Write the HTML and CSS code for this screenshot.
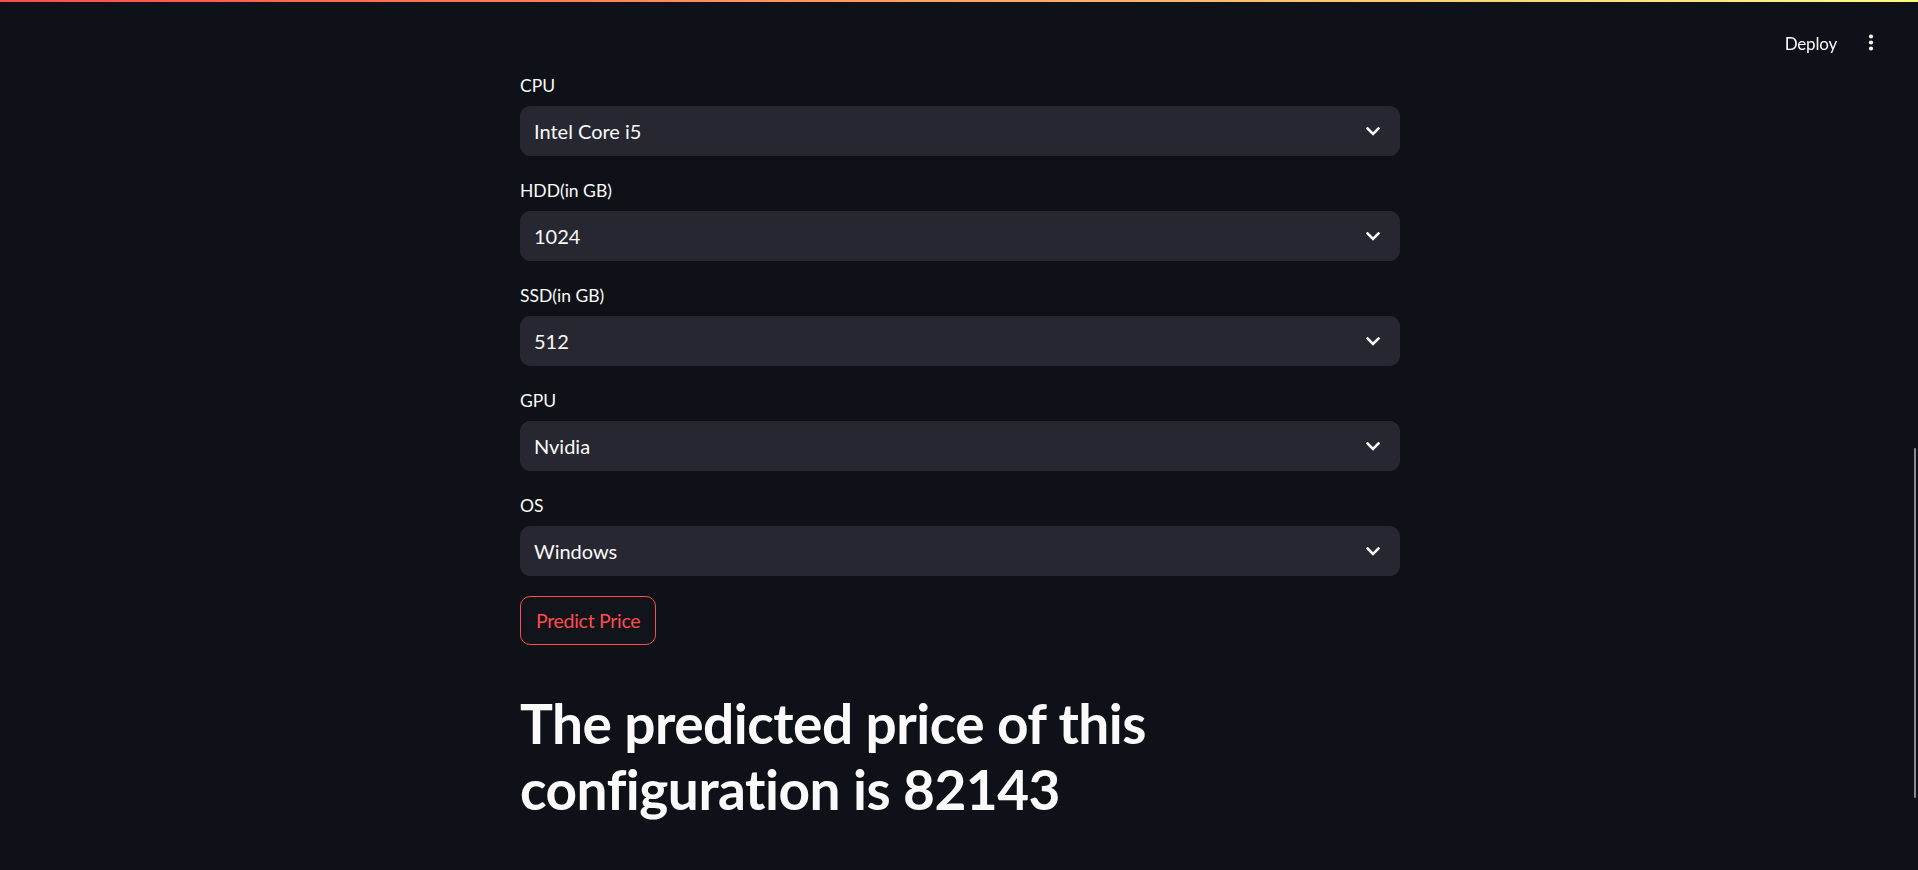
FILE: index.html
```html
<!DOCTYPE html>
<html lang="en">
<head>
<meta charset="utf-8">
<title>Laptop Price Predictor</title>
<link rel="stylesheet" href="styles.css">
</head>
<body>
<div class="decoration"></div>
<header class="toolbar">
  <span class="deploy">Deploy</span>
  <span class="kebab" aria-label="Main menu">
    <svg width="6" height="18" viewBox="0 0 6 18"><circle cx="3" cy="2.5" r="2.1" fill="#fafafa"/><circle cx="3" cy="8.5" r="2.1" fill="#fafafa"/><circle cx="3" cy="14.5" r="2.1" fill="#fafafa"/></svg>
  </span>
</header>
<div class="app">
  <main class="block">
    <div class="widget">
      <label class="label">CPU</label>
      <div class="select"><span class="value">Intel Core i5</span><svg class="chev" width="14" height="9" viewBox="0 0 14 9"><path d="M1.5 1.5 L7 7 L12.5 1.5" fill="none" stroke="#fafafa" stroke-width="2.6" stroke-linecap="square"/></svg></div>
    </div>
    <div class="widget">
      <label class="label">HDD(in GB)</label>
      <div class="select"><span class="value">1024</span><svg class="chev" width="14" height="9" viewBox="0 0 14 9"><path d="M1.5 1.5 L7 7 L12.5 1.5" fill="none" stroke="#fafafa" stroke-width="2.6" stroke-linecap="square"/></svg></div>
    </div>
    <div class="widget">
      <label class="label">SSD(in GB)</label>
      <div class="select"><span class="value">512</span><svg class="chev" width="14" height="9" viewBox="0 0 14 9"><path d="M1.5 1.5 L7 7 L12.5 1.5" fill="none" stroke="#fafafa" stroke-width="2.6" stroke-linecap="square"/></svg></div>
    </div>
    <div class="widget">
      <label class="label">GPU</label>
      <div class="select"><span class="value">Nvidia</span><svg class="chev" width="14" height="9" viewBox="0 0 14 9"><path d="M1.5 1.5 L7 7 L12.5 1.5" fill="none" stroke="#fafafa" stroke-width="2.6" stroke-linecap="square"/></svg></div>
    </div>
    <div class="widget">
      <label class="label">OS</label>
      <div class="select"><span class="value">Windows</span><svg class="chev" width="14" height="9" viewBox="0 0 14 9"><path d="M1.5 1.5 L7 7 L12.5 1.5" fill="none" stroke="#fafafa" stroke-width="2.6" stroke-linecap="square"/></svg></div>
    </div>
    <div class="widget">
      <button class="btn">Predict Price</button>
    </div>
    <h1 class="result">The predicted price of this configuration is 82143</h1>
  </main>
</div>
<div class="scrollbar"></div>
</body>
</html>
```
FILE: styles.css
```css
html, body {
  margin: 0;
  padding: 0;
  height: 100%;
  background: #0e1117;
  overflow: hidden;
}
body {
  font-family: "Lato", "Noto Sans", sans-serif;
  font-variant-ligatures: none;
  color: #fafafa;
}
.decoration {
  position: fixed;
  top: 0;
  left: 0;
  right: 0;
  height: 2px;
  background: linear-gradient(90deg, #ff4b4b, #fffd80);
  z-index: 5;
}
.toolbar {
  position: fixed;
  top: 0;
  right: 0;
  height: 86px;
  display: flex;
  align-items: center;
  gap: 31px;
  padding-right: 44px;
  z-index: 4;
}
.deploy {
  font-size: 17px;
  letter-spacing: -0.2px;
  color: #fafafa;
  line-height: 1;
}
.kebab {
  display: flex;
  align-items: center;
  height: 18px;
}
.kebab svg { display: block; }
.app {
  padding-left: 2px;
}
.block {
  width: 880px;
  margin: 0 auto;
  padding-top: 71px;
  display: flex;
  flex-direction: column;
  gap: 20px;
}
.widget {
  display: flex;
  flex-direction: column;
}
.label {
  min-height: 30px;
  padding-top: 1px;
  box-sizing: border-box;
  margin-bottom: 5px;
  font-size: 17.5px;
  line-height: 28px;
  color: #fafafa;
}
.select {
  height: 50px;
  box-sizing: border-box;
  background: #262730;
  border: 1px solid #262730;
  border-radius: 10px;
  display: flex;
  align-items: center;
  justify-content: space-between;
  padding: 0 19px 0 13px;
}
.value {
  font-size: 20px;
  color: #fafafa;
}
.chev { display: block; }
.btn {
  align-self: flex-start;
  height: 49px;
  box-sizing: border-box;
  padding: 0 15px;
  border: 1px solid #ff4b4b;
  border-radius: 10px;
  background: #11141b;
  color: #ff4b4b;
  font-family: inherit;
  font-size: 19.5px;
  letter-spacing: -0.3px;
  line-height: 1;
}
.result {
  margin: 0;
  padding: 25px 0 20px;
  font-size: 55px;
  font-weight: 700;
  line-height: 1.2;
  letter-spacing: -0.5px;
  color: #fafafa;
}
.scrollbar {
  position: fixed;
  right: 2px;
  top: 448px;
  width: 2px;
  height: 350px;
  background: #8a8a8e;
  border-radius: 1px;
}
```
